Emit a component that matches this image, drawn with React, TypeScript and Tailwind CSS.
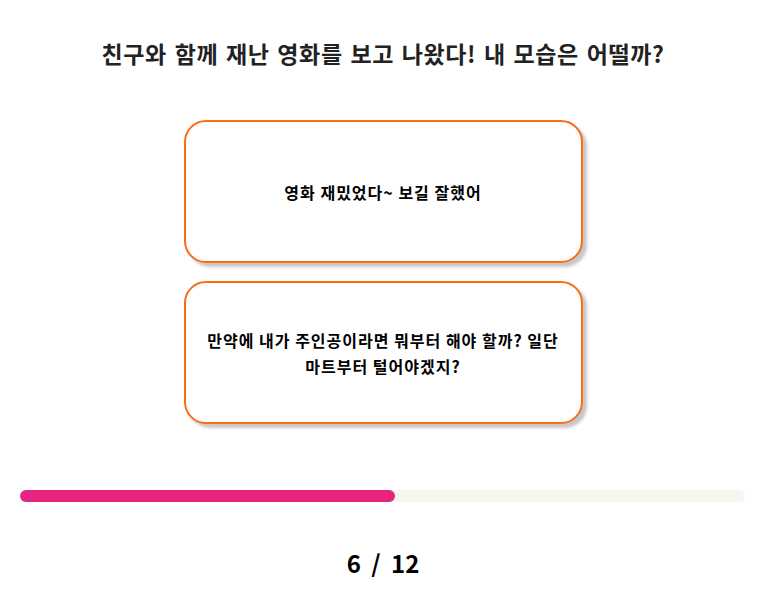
const font = "font-['Noto_Sans_CJK_KR','Noto_Sans',sans-serif]";

const answers = [
  "영화 재밌었다~ 보길 잘했어",
  "만약에 내가 주인공이라면 뭐부터 해야 할까? 일단 마트부터 털어야겠지?",
];

function AnswerCard({ text }: { text: string }) {
  return (
    <button
      className={`w-[399px] h-[143px] flex items-center justify-center px-3 bg-white border-2 border-[#ff6a13] rounded-[22px] shadow-[4px_4px_3px_#c8c8c8] text-[16px] leading-[26px] font-bold text-black text-center tracking-[1px] break-keep ${font}`}
    >
      {text}
    </button>
  );
}

export default function App() {
  const current = 6;
  const total = 12;
  return (
    <div className={`w-[761px] h-[610px] bg-white flex flex-col items-center pl-[5px] ${font}`}>
      <h1 className="mt-[36px] text-[23px] leading-[34px] font-bold text-[#222] tracking-[0.6px] [word-spacing:2px]">
        친구와 함께 재난 영화를 보고 나왔다! 내 모습은 어떨까?
      </h1>
      <div className="mt-[50px] flex flex-col gap-[18px]">
        {answers.map((a) => (
          <AnswerCard key={a} text={a} />
        ))}
      </div>
      <div className="mt-[66px] self-start ml-[15px] w-[725px] h-[12px] rounded-full bg-[#f9f6f1]">
        <div
          className="h-full rounded-full bg-[#e62580]"
          style={{ width: `${(375 / 725) * 100}%` }}
        />
      </div>
      <div className="mt-[44px] text-[24px] leading-[34px] font-bold text-black [word-spacing:5px]">
        {current} / {total}
      </div>
    </div>
  );
}
